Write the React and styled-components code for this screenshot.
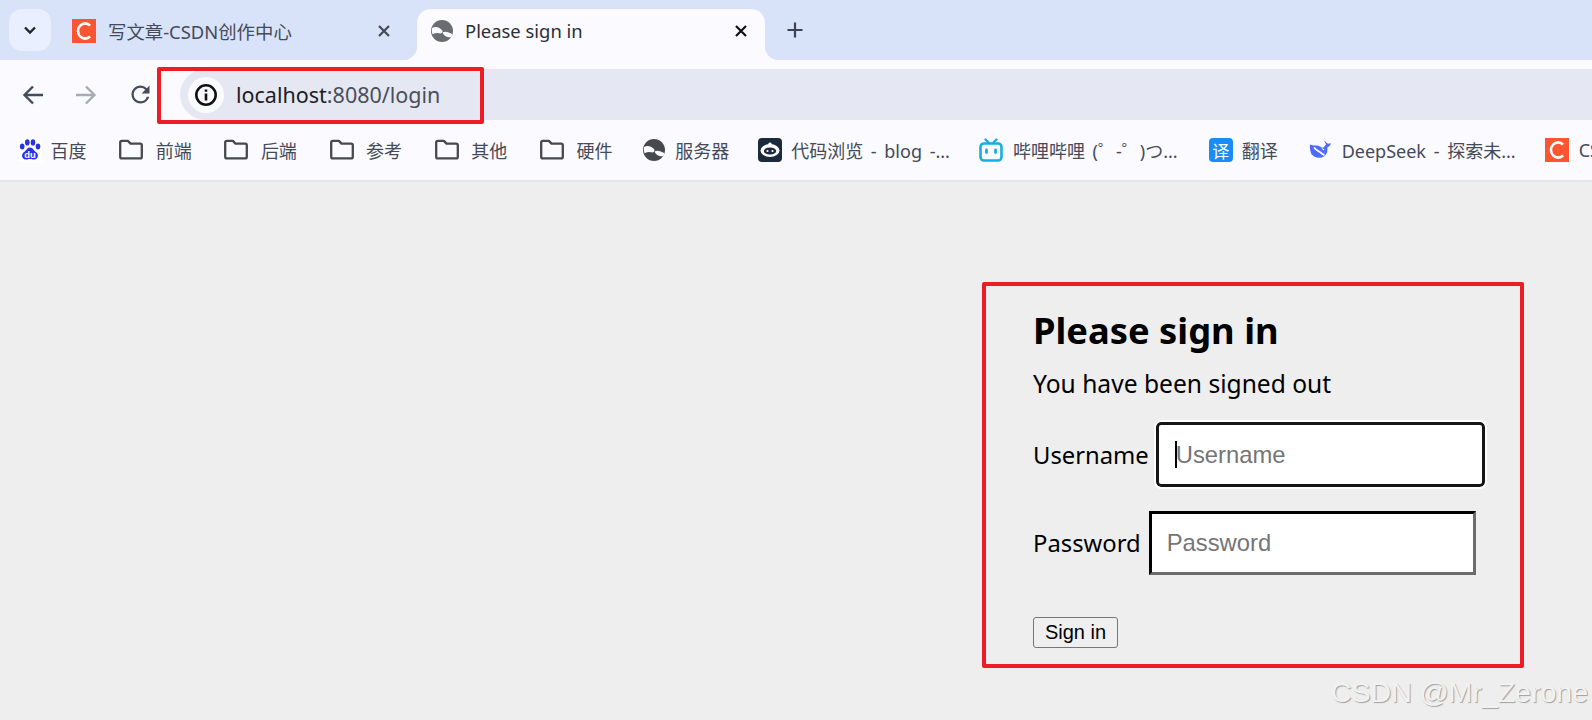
import React from 'react'
import styled, { createGlobalStyle } from 'styled-components'

const Global = createGlobalStyle`
  html, body { margin: 0; padding: 0; background: #eeeeee; }
  body { width: 1592px; height: 720px; overflow: hidden; }
`

const UI_FONT = `"Noto Sans", "Noto Sans CJK SC", sans-serif`

const Page = styled.div`
  position: relative;
  width: 1592px;
  height: 720px;
  overflow: hidden;
  background: #eeeeee;
  font-family: ${UI_FONT};
`

const TabStrip = styled.div`
  display: flex;
  align-items: flex-end;
  height: 60px;
  background: #d8e2f9;
  padding-left: 9px;
`

const TabSearch = styled.div`
  display: flex;
  align-items: center;
  justify-content: center;
  width: 42px;
  height: 42px;
  margin-bottom: 9px;
  border-radius: 13px;
  background: #e9effe;
`

const Tab = styled.div`
  position: relative;
  display: flex;
  align-items: center;
  height: 51px;
  width: ${(p) => p.$width}px;
  margin-left: ${(p) => p.$left}px;
  padding: 0 ${(p) => (p.$active ? 17 : 14)}px 8px ${(p) => (p.$active ? 14 : 12)}px;
  box-sizing: border-box;
  border-radius: 14px 14px 0 0;
  background: ${(p) => (p.$active ? '#fafaff' : 'transparent')};
  color: ${(p) => (p.$active ? '#2c2f36' : '#454a57')};
  ${(p) =>
    p.$active &&
    `
    &::before, &::after {
      content: '';
      position: absolute;
      bottom: 0;
      width: 14px;
      height: 14px;
    }
    &::before { left: -14px; background: radial-gradient(circle at 0 0, transparent 14px, #fafaff 14.5px); }
    &::after { right: -14px; background: radial-gradient(circle at 100% 0, transparent 14px, #fafaff 14.5px); }
  `}
`

const TabTitle = styled.span`
  flex: 1;
  margin-left: 12px;
  font-size: 18.4px;
  white-space: nowrap;
`

const NewTab = styled.div`
  display: flex;
  align-items: center;
  margin: 0 0 18px 21px;
  height: 24px;
`

const Toolbar = styled.div`
  display: flex;
  align-items: flex-end;
  height: 60px;
  background: #fafaff;
`

const NavButtons = styled.div`
  display: flex;
  align-self: flex-end;
  align-items: center;
  gap: 29px;
  height: 51px;
  padding-left: 21px;
  width: 159px;
  box-sizing: border-box;
`

const Omnibox = styled.div`
  display: flex;
  align-items: center;
  flex: 1;
  height: 51px;
  margin-left: 21px;
  padding-left: 8px;
  background: #e5e8f3;
  border-radius: 26px 0 0 26px;
  font-size: 21.5px;
  color: #4a4e5a;
`

const InfoChip = styled.div`
  display: flex;
  align-items: center;
  justify-content: center;
  width: 36px;
  height: 36px;
  border-radius: 50%;
  background: #fafaff;
  margin-right: 12px;
`

const Host = styled.span`
  color: #1c1d22;
`

const RedBox = styled.div`
  position: absolute;
  left: 157px;
  top: 67px;
  width: 327px;
  height: 57px;
  box-sizing: border-box;
  border: 4px solid #ee1c25;
  border-radius: 2px;
`

const Bookmarks = styled.div`
  display: flex;
  align-items: center;
  gap: 31px;
  height: 60px;
  padding-left: 18px;
  background: #fafaff;
  border-bottom: 2px solid #e2e6ee;
  overflow: hidden;
`

const Bookmark = styled.div`
  display: flex;
  flex: none;
  align-items: center;
  gap: ${(p) => p.$gap}px;
  margin-right: ${(p) => p.$after}px;
  font-size: 18px;
  word-spacing: 3px;
  color: #454a57;
  white-space: nowrap;
`

const Favicon = styled.div`
  display: flex;
  flex: none;
  align-items: center;
  justify-content: center;
  width: 24px;
  height: 24px;
  background: ${(p) => p.$bg || 'transparent'};
  border-radius: ${(p) => p.$radius || 0}px;
  color: #fff;
  font-size: ${(p) => p.$size || 17}px;
`

const Content = styled.div`
  padding: 100px 0 0 982px;
`

const Card = styled.div`
  width: 542px;
  height: 386px;
  box-sizing: border-box;
  border: 4px solid #ee1c25;
  border-radius: 2px;
  padding: 22px 0 0 47px;
  color: #000;
`

const Heading = styled.h2`
  margin: 0;
  font-size: 36.3px;
  line-height: 44px;
  font-weight: 700;
`

const Message = styled.p`
  margin: 15px 0 0;
  font-size: 24.6px;
  line-height: 34px;
`

const Row = styled.label`
  display: flex;
  align-items: center;
  gap: ${(p) => p.$gap}px;
  margin-top: ${(p) => p.$top}px;
  font-size: 23.8px;
  line-height: 34px;
`

const Field = styled.div`
  display: flex;
  align-items: center;
  position: relative;
  box-sizing: border-box;
  width: ${(p) => p.$width}px;
  height: ${(p) => (p.$focus ? 65 : 64)}px;
  padding-left: 16px;
  background: #fff;
  font-family: "Liberation Sans", Arial, sans-serif;
  font-size: 23.8px;
  color: #757575;
  ${(p) =>
    p.$focus
      ? `
    border: 3px solid #161616;
    border-radius: 5px;
    outline: 2px solid #fff;
  `
      : `
    border: 3px inset #6c6c6c;
    border-color: #222 #6c6c6c #6c6c6c #222;
    padding-left: 15px;
  `}
`

const Caret = styled.span`
  width: 2px;
  height: 27px;
  background: #000;
  margin-right: -1px;
`

const Submit = styled.button`
  display: block;
  width: 85px;
  height: 31px;
  margin-top: 42px;
  padding: 0;
  box-sizing: border-box;
  border: 1px solid #767676;
  border-radius: 3px;
  background: #efefef;
  color: #000;
  font-family: "Liberation Sans", Arial, sans-serif;
  font-size: 20px;
`

const Watermark = styled.div`
  position: absolute;
  left: 1331px;
  top: 674px;
  font-family: "Liberation Sans", Arial, sans-serif;
  font-size: 28.5px;
  line-height: 36px;
  white-space: nowrap;
  color: #f2f2f2;
  text-shadow: 1px 1px 1px #a0a0a0;
`

const CsdnIcon = () => (
  <svg width="24" height="24" viewBox="0 0 24 24">
    <rect width="24" height="24" fill="#fc5531" />
    <path d="M18 6.600C16.600 5 14.900 4.400 13.200 4.400 9.200 4.400 6 7.600 6 12s3.200 7.600 7.200 7.600c1.800 0 3.500-.7 4.900-2.200" fill="none" stroke="#fff" strokeWidth="2.600" />
  </svg>
)

const Globe = ({ color }) => (
  <svg width="22" height="22" viewBox="0 0 22 22">
    <circle cx="11" cy="11" r="11" fill={color} />
    <path d="M1 8C5 6 8 7.500 11 10c1.200 1.200 .3 3-1.500 3.500C7 12.500 4 13 1.500 14.200 .8 12 .6 10 1 8z" fill="#fafaff" />
    <path d="M11.500 12.500c3-1.500 6-.5 10 1.800-.3 1-.7 2-1.300 2.900-3.500 .3-7-.8-8.700-4.700z" fill="#fafaff" />
  </svg>
)

const Folder = () => (
  <svg width="24" height="24" viewBox="0 0 24 24" fill="none" stroke="#47494f" strokeWidth="2.300" strokeLinejoin="round">
    <path d="M1.200 4.600c0-1 .7-1.700 1.700-1.700h6l2.600 2.700h9.600c1 0 1.700 .7 1.700 1.700v11.400c0 1-.7 1.700-1.700 1.700H2.900c-1 0-1.700-.7-1.700-1.700z" />
  </svg>
)

const BaiduIcon = () => (
  <svg width="24" height="24" viewBox="0 0 24 24">
    <rect width="24" height="24" fill="#fff" />
    <g fill="#2932e1">
      <ellipse cx="4.200" cy="8.500" rx="2.300" ry="3" />
      <ellipse cx="9.300" cy="4.400" rx="2.300" ry="3.100" />
      <ellipse cx="15" cy="4.400" rx="2.300" ry="3.100" />
      <ellipse cx="20" cy="8.500" rx="2.300" ry="3" />
      <path d="M12 9.500c3 0 3.500 3 6 4.500 3 2 2.500 7.500-2 7.500-1.500 0-2.500-.5-4-.5s-2.500.5-4 .5c-4.500 0-5-5.500-2-7.500 2.500-1.500 3-4.500 6-4.500z" />
    </g>
    <text x="12" y="20" textAnchor="middle" fontFamily="Liberation Sans, sans-serif" fontWeight="700" fontSize="9.500" fill="#fff">du</text>
  </svg>
)

const RobotIcon = () => (
  <svg width="24" height="24" viewBox="0 0 24 24">
    <rect width="24" height="24" rx="4" fill="#1c2a3e" />
    <ellipse cx="12" cy="12.500" rx="9.500" ry="6.500" fill="#fff" />
    <circle cx="12" cy="6.400" r="1.800" fill="#fff" />
    <ellipse cx="12" cy="13" rx="6.200" ry="3.600" fill="#1c2a3e" />
    <circle cx="9.500" cy="13" r="1.100" fill="#fff" />
    <circle cx="14.500" cy="13" r="1.100" fill="#fff" />
  </svg>
)

const BiliIcon = () => (
  <svg width="24" height="24" viewBox="0 0 24 24" fill="none" stroke="#16aee3" strokeLinecap="round">
    <rect x="1.500" y="5.500" width="21" height="17" rx="3.500" strokeWidth="2.600" />
    <path d="M6.500 1.500l3.500 3.500M17.500 1.500l-3.500 3.500" strokeWidth="2.400" />
    <path d="M7.500 12v2.500M16.500 12v2.500" strokeWidth="2.800" />
  </svg>
)

const DeepSeekIcon = () => (
  <svg width="24" height="24" viewBox="0 0 24 24">
    <path fill="#4d6bfe" d="M1 6.500c3 1.500 6 .5 9 1.500 1.500 .5 2.500 1.200 3.500 2 1.500-1 3-2.500 3.500-3.800-.5-1.200-1.500-2.200-1.700-3.500 1.200 .4 1.700 1.500 2.500 2.300 .8 .8 1.800 .8 2.800 .6 .5-.3 .9-.6 1.400-.3-.3 1.800-2 3.500-3.700 4.300 .3 2 .2 4.300-1 6.300-1.400 2.200-3.800 3.800-7 3.900-3.400 .1-6-1.500-8-3.800C1.300 13 .5 9.500 1 6.500z" />
    <path d="M5 9.500c2 2.500 4.500 3.500 6.500 5 1.200 1 2.500 2.200 4 2.500" fill="none" stroke="#fafaff" strokeWidth="1.800" />
    <path d="M12.500 10c1 .3 2.500 1 3 2-.8 .6-2.500-.5-3-2z" fill="#fafaff" />
  </svg>
)

const bookmarks = [
  { icon: <BaiduIcon />, label: '百度', gap: 8.5, after: 1.7 },
  { icon: <Folder />, label: '前端', gap: 12.5, after: 1.7 },
  { icon: <Folder />, label: '后端', gap: 12.5, after: 1.7 },
  { icon: <Folder />, label: '参考', gap: 12.5, after: 1.7 },
  { icon: <Folder />, label: '其他', gap: 12.5, after: 1.7 },
  { icon: <Folder />, label: '硬件', gap: 12.5, after: -0.3 },
  { icon: <Globe color="#47494f" />, label: '服务器', gap: 10, after: -2 },
  { icon: <RobotIcon />, label: '代码浏览 - blog -...', gap: 9, after: -2 },
  { icon: <BiliIcon />, label: '哔哩哔哩 (゜-゜)つ...', gap: 10, after: 0 },
  { icon: <Favicon $bg="#1a8cf5" $radius={4}>译</Favicon>, label: '翻译', gap: 9, after: 0 },
  { icon: <DeepSeekIcon />, label: 'DeepSeek - 探索未...', gap: 9, after: -2 },
  { icon: <CsdnIcon />, label: 'CSDN', gap: 10, after: 0 },
]

export default function App() {
  return (
    <Page>
      <Global />
      <TabStrip>
        <TabSearch>
          <svg width="16" height="16" viewBox="0 0 16 16" fill="none" stroke="#22252c" strokeWidth="2.400">
            <path d="M3 5.500l5 5 5-5" />
          </svg>
        </TabSearch>
        <Tab $width={345} $left={9}>
          <CsdnIcon />
          <TabTitle>写文章-CSDN创作中心</TabTitle>
          <svg width="14" height="14" viewBox="0 0 14 14" stroke="#454a57" strokeWidth="2.200">
            <path d="M2 2l10 10M12 2L2 12" />
          </svg>
        </Tab>
        <Tab $width={348} $left={12} $active>
          <Globe color="#6a6c72" />
          <TabTitle>Please sign in</TabTitle>
          <svg width="14" height="14" viewBox="0 0 14 14" stroke="#111" strokeWidth="2.200">
            <path d="M2 2l10 10M12 2L2 12" />
          </svg>
        </Tab>
        <NewTab>
          <svg width="18" height="18" viewBox="0 0 18 18" stroke="#3c4350" strokeWidth="2.200">
            <path d="M9 1.500v15M1.500 9h15" />
          </svg>
        </NewTab>
      </TabStrip>
      <Toolbar>
        <NavButtons>
          <svg width="24" height="24" viewBox="0 0 24 24" fill="none" stroke="#444b5c" strokeWidth="2.400">
            <path d="M22 12H4M12 3.500L3.500 12l8.500 8.500" />
          </svg>
          <svg width="24" height="24" viewBox="0 0 24 24" fill="none" stroke="#a9abb2" strokeWidth="2.400">
            <path d="M2 12h18M12 3.500l8.500 8.500-8.500 8.500" />
          </svg>
          <svg width="27" height="27" viewBox="0 0 24 24" fill="#444b5c">
            <path d="M17.650 6.350A7.958 7.958 0 0 0 12 4c-4.420 0-7.990 3.580-7.990 8s3.570 8 7.990 8c3.730 0 6.840-2.550 7.730-6h-2.080A5.990 5.990 0 0 1 12 18c-3.310 0-6-2.690-6-6s2.690-6 6-6c1.660 0 3.140 .69 4.220 1.780L13 11h7V4l-2.350 2.350z" />
          </svg>
        </NavButtons>
        <Omnibox>
          <InfoChip>
            <svg width="24" height="24" viewBox="0 0 26 26" fill="none" stroke="#111" strokeWidth="2.800">
              <circle cx="13" cy="13" r="10.500" />
              <path d="M13 11.500v7.500M13 7v2.600" />
            </svg>
          </InfoChip>
          <span><Host>localhost</Host>:8080/login</span>
        </Omnibox>
      </Toolbar>
      <RedBox />
      <Bookmarks>
        {bookmarks.map((b) => (
          <Bookmark key={b.label} $gap={b.gap} $after={b.after}>
            {b.icon}
            {b.label}
          </Bookmark>
        ))}
      </Bookmarks>
      <Content>
        <Card>
          <Heading>Please sign in</Heading>
          <Message>You have been signed out</Message>
          <Row $gap={7} $top={21}>
            Username
            <Field $width={329} $focus>
              <Caret />
              Username
            </Field>
          </Row>
          <Row $gap={8} $top={24}>
            Password
            <Field $width={327}>Password</Field>
          </Row>
          <Submit>Sign in</Submit>
        </Card>
      </Content>
      <Watermark>CSDN @Mr_Zerone</Watermark>
    </Page>
  )
}
